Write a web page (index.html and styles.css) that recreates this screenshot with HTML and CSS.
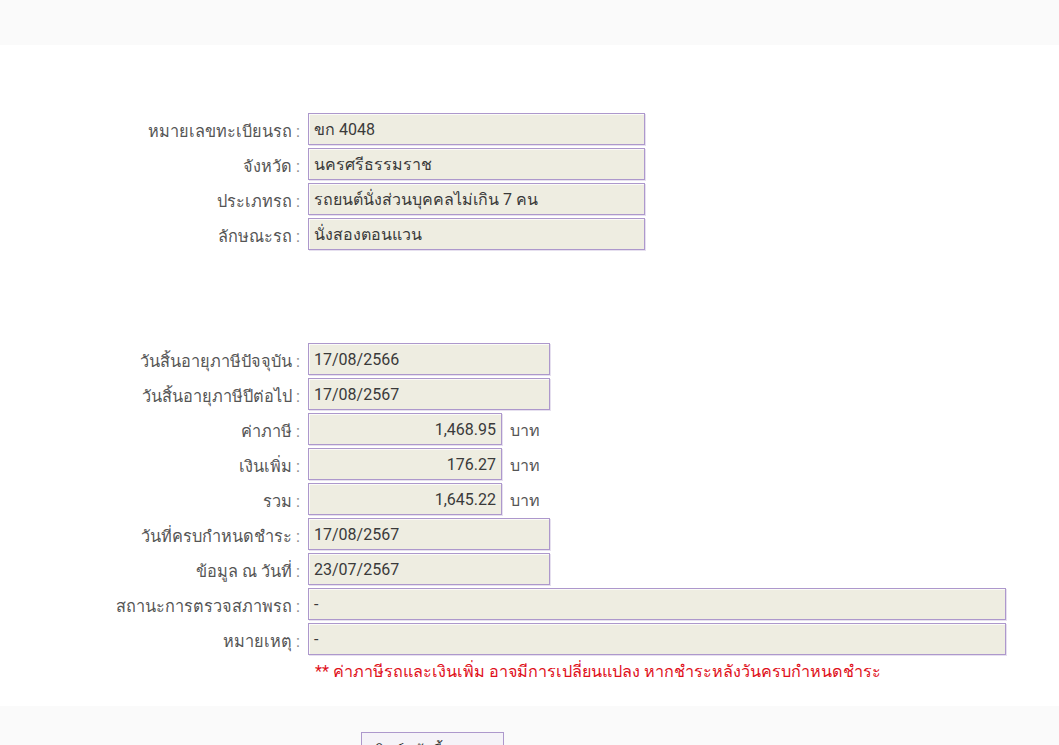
FILE: index.html
```html
<!DOCTYPE html>
<html lang="th">
<head>
    <meta charset="UTF-8">
    <title>ตรวจสอบภาษีรถ</title>
    <link rel="stylesheet" href="styles.css">
</head>
<body>

    <div class="topbar"></div>

    <div class="content">
        <div class="form-block">
            <label class="lbl">หมายเลขทะเบียนรถ <span class="colon">:</span></label>
            <div class="field wide-md">ขก 4048</div>

            <label class="lbl">จังหวัด <span class="colon">:</span></label>
            <div class="field wide-md">นครศรีธรรมราช</div>

            <label class="lbl">ประเภทรถ <span class="colon">:</span></label>
            <div class="field wide-md">รถยนต์นั่งส่วนบุคคลไม่เกิน 7 คน</div>

            <label class="lbl">ลักษณะรถ <span class="colon">:</span></label>
            <div class="field wide-md">นั่งสองตอนแวน</div>
        </div>

        <div class="form-block second">
            <label class="lbl">วันสิ้นอายุภาษีปัจจุบัน <span class="colon">:</span></label>
            <div class="field date">17/08/2566</div>

            <label class="lbl">วันสิ้นอายุภาษีปีต่อไป <span class="colon">:</span></label>
            <div class="field date">17/08/2567</div>

            <label class="lbl">ค่าภาษี <span class="colon">:</span></label>
            <div class="money"><div class="field amount">1,468.95</div><span class="unit">บาท</span></div>

            <label class="lbl">เงินเพิ่ม <span class="colon">:</span></label>
            <div class="money"><div class="field amount">176.27</div><span class="unit">บาท</span></div>

            <label class="lbl">รวม <span class="colon">:</span></label>
            <div class="money"><div class="field amount">1,645.22</div><span class="unit">บาท</span></div>

            <label class="lbl">วันที่ครบกำหนดชำระ <span class="colon">:</span></label>
            <div class="field date">17/08/2567</div>

            <label class="lbl">ข้อมูล ณ วันที่ <span class="colon">:</span></label>
            <div class="field date">23/07/2567</div>

            <label class="lbl">สถานะการตรวจสภาพรถ <span class="colon">:</span></label>
            <div class="field full">-</div>

            <label class="lbl">หมายเหตุ <span class="colon">:</span></label>
            <div class="field full">-</div>

            <span></span>
            <div class="note">** ค่าภาษีรถและเงินเพิ่ม อาจมีการเปลี่ยนแปลง หากชำระหลังวันครบกำหนดชำระ</div>
        </div>
    </div>

    <div class="bottombar">
        <button class="back-btn">พิมพ์หน้านี้</button>
    </div>

</body>
</html>
```

FILE: styles.css
```css
body {
    margin: 0;
    font-family: Roboto, "Noto Sans", "DejaVu Sans", sans-serif;
    background-color: #fff;
    color: #333;
    overflow: hidden;
}

.topbar {
    height: 45px;
    background-color: #fafafa;
}

.content {
    padding-top: 68px;
    height: 593px;
}

.form-block {
    display: grid;
    grid-template-columns: 300px auto;
    column-gap: 8px;
    row-gap: 3px;
    align-items: center;
}

.form-block.second {
    margin-top: 93px;
}

.lbl {
    text-align: right;
    font-size: 16.3px;
    padding-top: 3px;
    color: #555;
}

.lbl .colon {
    color: #888;
}

.field {
    box-sizing: border-box;
    height: 32px;
    line-height: 28px;
    padding: 2px 5px 0;
    font-size: 16px;
    color: #3a3a3a;
    background-color: #eeede1;
    border: 1px solid #ad98cc;
    box-shadow: inset 1px 1px 0 #fbfbf7, 1px 1px 0 #e6e0ef;
    white-space: nowrap;
}

.wide-md { width: 337px; }
.date { width: 242px; }
.full { width: 698px; }

.money {
    display: flex;
    align-items: center;
    gap: 8px;
}

.amount {
    width: 194px;
    text-align: right;
}

.unit {
    font-size: 16px;
    padding-top: 3px;
    color: #555;
}

.note {
    padding: 0 0 0 7px;
    font-size: 16.2px;
    color: #e0101a;
}

.bottombar {
    height: 40px;
    background-color: #fafafa;
    padding-left: 361px;
    padding-top: 26px;
    box-sizing: border-box;
}

.back-btn {
    width: 143px;
    height: 36px;
    font-family: inherit;
    font-size: 15px;
    color: #333;
    text-align: left;
    padding: 2px 12px 0;
    background-color: #f5f3f8;
    border: 1px solid #ad98cc;
    vertical-align: top;
}
```
